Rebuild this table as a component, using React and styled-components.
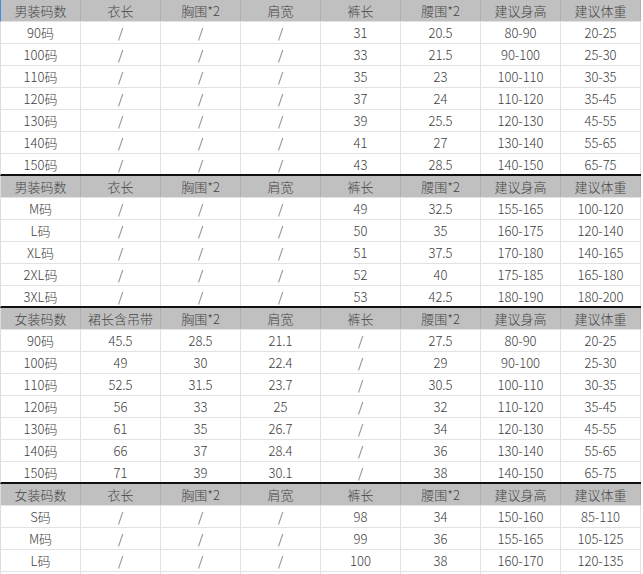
import React from "react";
import styled, { createGlobalStyle } from "styled-components";

const GlobalStyle = createGlobalStyle`
  html, body {
    margin: 0;
    padding: 0;
    background: #fff;
  }
  body {
    font-family: "Noto Sans CJK SC", "Noto Sans", sans-serif;
  }
`;

const Table = styled.div`
  width: 641px;
  display: flex;
  flex-direction: column;
`;

const Row = styled.div`
  display: grid;
  grid-template-columns: repeat(8, 80px);
  height: 22px;
  box-sizing: border-box;
  border-left: 1px solid ${(p) => (p.$first ? "#3d8ee8" : "#dcdcdc")};
  border-bottom: ${(p) => (p.$last ? "2px solid #111" : "1px solid #e2e2e2")};
  background: ${(p) => (p.$head ? "#c0c0c0" : "#fff")};
`;

const Cell = styled.div`
  display: flex;
  align-items: center;
  justify-content: center;
  box-sizing: border-box;
  border-right: 1px solid ${(p) => (p.$head ? "#b0b0b0" : "#e2e2e2")};
  font-size: 13px;
  font-weight: 300;
  line-height: 1;
  color: ${(p) => (p.$head ? "#454545" : "#3e3e3e")};
  white-space: nowrap;
`;

const menHead = ["男装码数", "衣长", "胸围*2", "肩宽", "裤长", "腰围*2", "建议身高", "建议体重"];
const womenHead = ["女装码数", "裙长含吊带", "胸围*2", "肩宽", "裤长", "腰围*2", "建议身高", "建议体重"];
const womenHead2 = ["女装码数", "衣长", "胸围*2", "肩宽", "裤长", "腰围*2", "建议身高", "建议体重"];

const sections = [
  {
    head: menHead,
    rows: [
      ["90码", "/", "/", "/", "31", "20.5", "80-90", "20-25"],
      ["100码", "/", "/", "/", "33", "21.5", "90-100", "25-30"],
      ["110码", "/", "/", "/", "35", "23", "100-110", "30-35"],
      ["120码", "/", "/", "/", "37", "24", "110-120", "35-45"],
      ["130码", "/", "/", "/", "39", "25.5", "120-130", "45-55"],
      ["140码", "/", "/", "/", "41", "27", "130-140", "55-65"],
      ["150码", "/", "/", "/", "43", "28.5", "140-150", "65-75"],
    ],
  },
  {
    head: menHead,
    rows: [
      ["M码", "/", "/", "/", "49", "32.5", "155-165", "100-120"],
      ["L码", "/", "/", "/", "50", "35", "160-175", "120-140"],
      ["XL码", "/", "/", "/", "51", "37.5", "170-180", "140-165"],
      ["2XL码", "/", "/", "/", "52", "40", "175-185", "165-180"],
      ["3XL码", "/", "/", "/", "53", "42.5", "180-190", "180-200"],
    ],
  },
  {
    head: womenHead,
    rows: [
      ["90码", "45.5", "28.5", "21.1", "/", "27.5", "80-90", "20-25"],
      ["100码", "49", "30", "22.4", "/", "29", "90-100", "25-30"],
      ["110码", "52.5", "31.5", "23.7", "/", "30.5", "100-110", "30-35"],
      ["120码", "56", "33", "25", "/", "32", "110-120", "35-45"],
      ["130码", "61", "35", "26.7", "/", "34", "120-130", "45-55"],
      ["140码", "66", "37", "28.4", "/", "36", "130-140", "55-65"],
      ["150码", "71", "39", "30.1", "/", "38", "140-150", "65-75"],
    ],
  },
  {
    head: womenHead2,
    rows: [
      ["S码", "/", "/", "/", "98", "34", "150-160", "85-110"],
      ["M码", "/", "/", "/", "99", "36", "155-165", "105-125"],
      ["L码", "/", "/", "/", "100", "38", "160-170", "120-135"],
      ["", "", "", "", "", "", "", ""],
    ],
    open: true,
  },
];

export default function App() {
  return (
    <>
      <GlobalStyle />
      <Table>
        {sections.map((sec, si) => (
          <React.Fragment key={si}>
            <Row $head $first={si === 0}>
              {sec.head.map((h, i) => (
                <Cell $head key={i}>{h}</Cell>
              ))}
            </Row>
            {sec.rows.map((r, ri) => (
              <Row key={ri} $last={!sec.open && ri === sec.rows.length - 1}>
                {r.map((c, ci) => (
                  <Cell key={ci}>{c}</Cell>
                ))}
              </Row>
            ))}
          </React.Fragment>
        ))}
      </Table>
    </>
  );
}
